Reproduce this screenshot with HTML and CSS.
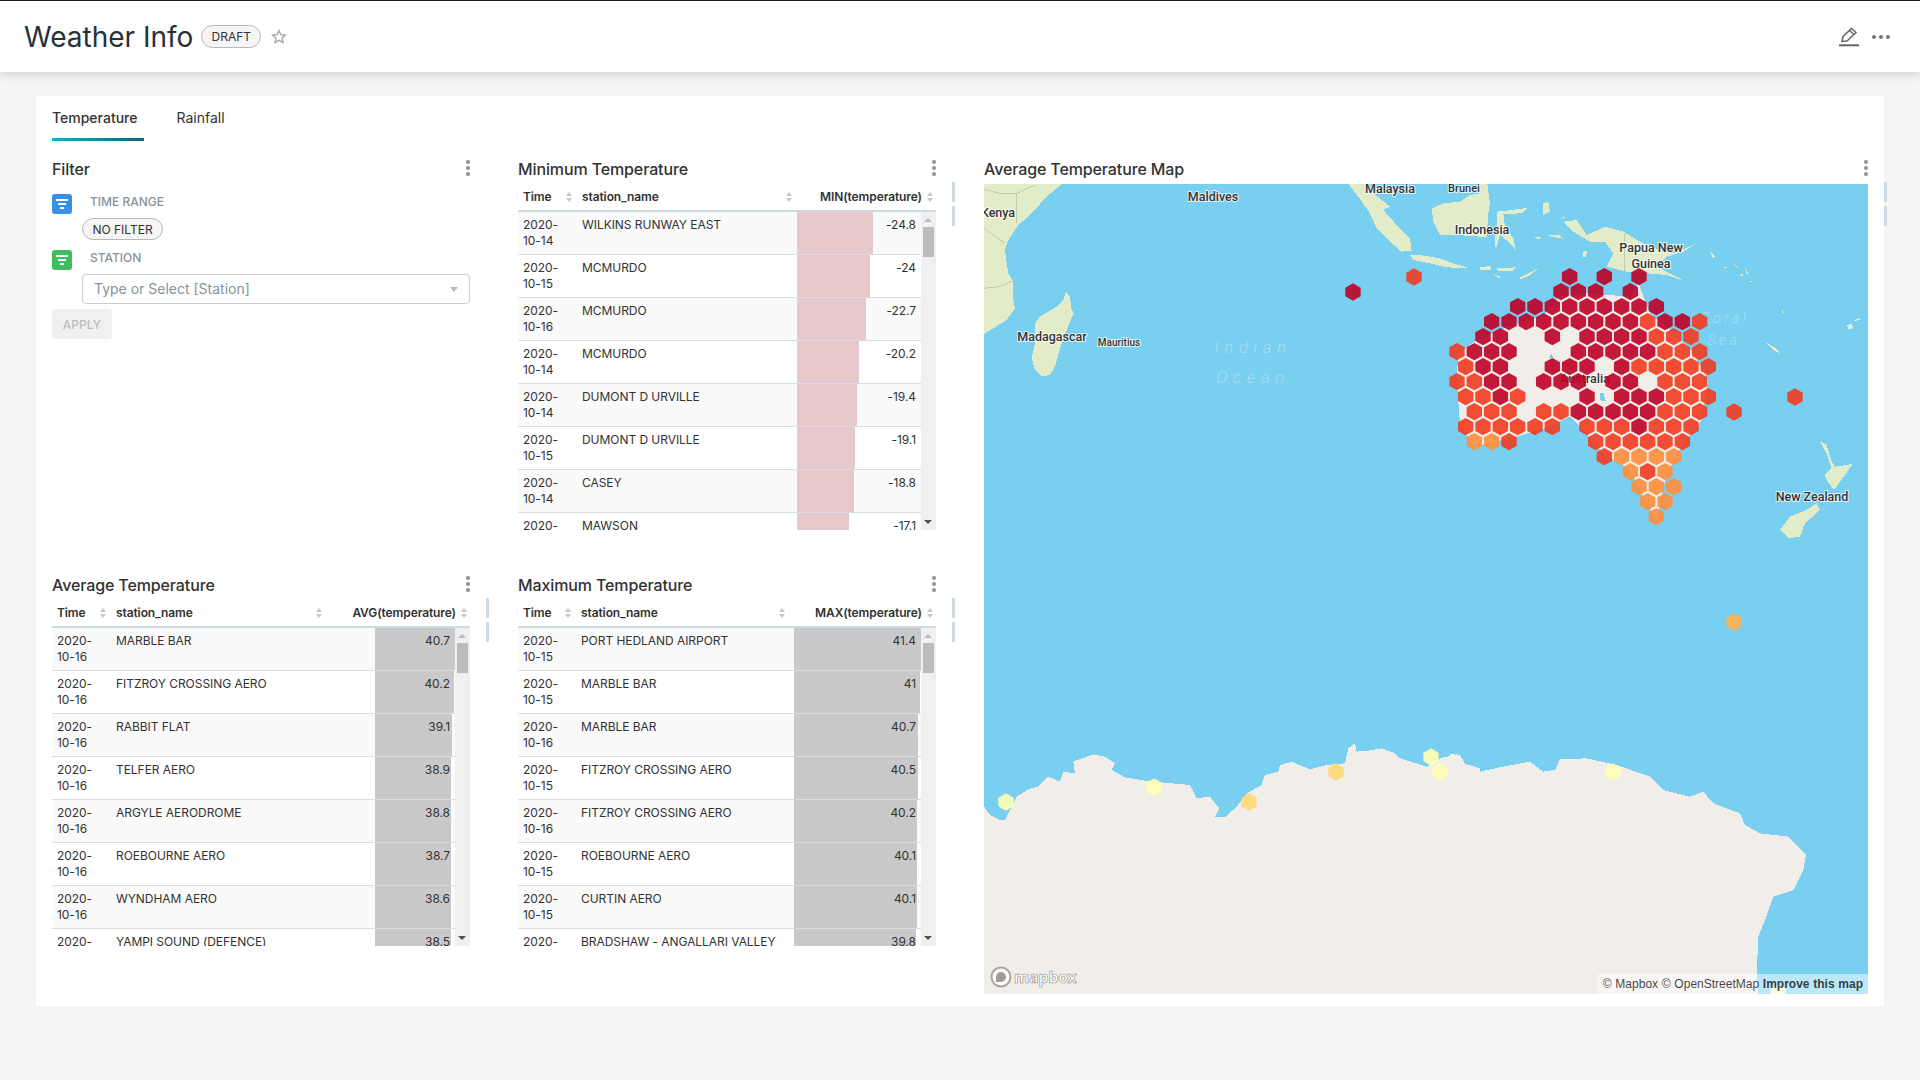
FILE: index.html
```html
<!DOCTYPE html>
<html lang="en">
<head>
    <meta charset="UTF-8">
    <title>Weather Info</title>
    <link rel="stylesheet" href="styles.css">
</head>
<body>
    <svg class="sprite" width="0" height="0">
        <symbol id="kebab" viewBox="0 0 6 18">
            <circle cx="3" cy="3" r="2"/>
            <circle cx="3" cy="9" r="2"/>
            <circle cx="3" cy="15" r="2"/>
        </symbol>
        <symbol id="filter" viewBox="0 0 20 20">
            <path d="M4 5h12v2H4zM6 9h8v2H6zM8 13h4v2H8z"/>
        </symbol>
    </svg>

    <header class="topbar">
        <h1 class="title">Weather Info</h1>
        <span class="pill draft">DRAFT</span>
        <svg class="star" viewBox="0 0 16 16">
            <path d="M8 1.6l1.9 4 4.4.5-3.2 3 .9 4.4L8 11.3l-4 2.2.9-4.4-3.2-3 4.4-.5z"/>
        </svg>
        <div class="actions">
            <svg class="edit" viewBox="0 0 20 20">
                <path d="M3 14.5l1-5L12.5 1.5 17 5.5 8 14zM10.5 3.5l4.5 4"/>
                <path class="edit-line" d="M0 18.3h20"/>
            </svg>
            <div class="dots"><i></i><i></i><i></i></div>
        </div>
    </header>

    <main class="page">
        <div class="card">
            <nav class="tabs">
                <a class="tab active">Temperature</a>
                <a class="tab">Rainfall</a>
            </nav>

            <div class="grid">
                <section class="chart">
                    <div class="chart-head">
                        <h2>Filter</h2>
                        <svg class="kebab"><use href="#kebab"/></svg>
                    </div>
                    <div class="filters">
                        <span class="f-icon blue"><svg><use href="#filter"/></svg></span>
                        <div class="f-body">
                            <div class="f-label">TIME RANGE</div>
                            <span class="pill nofilter">NO FILTER</span>
                        </div>
                        <span class="f-icon green"><svg><use href="#filter"/></svg></span>
                        <div class="f-body">
                            <div class="f-label">STATION</div>
                            <div class="select">Type or Select [Station]<i class="caret"></i></div>
                        </div>
                    </div>
                    <button class="apply" disabled>APPLY</button>
                </section>

                <section class="chart t-min">
                    <div class="chart-head">
                        <h2>Minimum Temperature</h2>
                        <svg class="kebab"><use href="#kebab"/></svg>
                    </div>
                    <div class="thead">
                        <div class="th">Time<i class="sort"></i></div>
                        <div class="th">station_name<i class="sort"></i></div>
                        <div class="th th-num">MIN(temperature)<i class="sort"></i></div>
                    </div>
                    <div class="tbody">
                        <div class="rows">
                            <div class="row"><div>2020-10-14</div><div>WILKINS RUNWAY EAST</div><div class="num"><i class="bar" style="width:76px"></i><span>-24.8</span></div></div>
                            <div class="row"><div>2020-10-15</div><div>MCMURDO</div><div class="num"><i class="bar" style="width:73px"></i><span>-24</span></div></div>
                            <div class="row"><div>2020-10-16</div><div>MCMURDO</div><div class="num"><i class="bar" style="width:69px"></i><span>-22.7</span></div></div>
                            <div class="row"><div>2020-10-14</div><div>MCMURDO</div><div class="num"><i class="bar" style="width:62px"></i><span>-20.2</span></div></div>
                            <div class="row"><div>2020-10-14</div><div>DUMONT D URVILLE</div><div class="num"><i class="bar" style="width:60px"></i><span>-19.4</span></div></div>
                            <div class="row"><div>2020-10-15</div><div>DUMONT D URVILLE</div><div class="num"><i class="bar" style="width:58px"></i><span>-19.1</span></div></div>
                            <div class="row"><div>2020-10-14</div><div>CASEY</div><div class="num"><i class="bar" style="width:57px"></i><span>-18.8</span></div></div>
                            <div class="row"><div>2020-10-14</div><div>MAWSON</div><div class="num"><i class="bar" style="width:52px"></i><span>-17.1</span></div></div>
                        </div>
                        <div class="scroll"><i class="up"></i><i class="thumb"></i><i class="down"></i></div>
                    </div>
                    <i class="handle"></i><i class="handle second"></i>
                </section>

                <section class="chart map-chart">
                    <div class="chart-head">
                        <h2>Average Temperature Map</h2>
                        <svg class="kebab"><use href="#kebab"/></svg>
                    </div>
                    <div class="map">
                        <svg class="map-svg" viewBox="984 184 884 810">
                            <rect x="984" y="184" width="884" height="810" fill="#78cff0"/>

                            <g class="green-land" transform="translate(980 160) scale(.33333)">
                                <path d="M0 72H245L200 110 150 165 115 195 85 240 75 270 80 310 85 340 100 365 100 420 105 445 80 480 40 505 12 522H0z"/>
                                <path d="M258 395L270 410 275 450 281 460 268 490 245 550 225 620 210 645 185 650 165 630 155 595 165 550 165 490 180 470 230 440 250 420z"/>
                                <path d="M1105 72H1160L1180 100 1230 140 1210 150 1250 195 1290 235 1295 272 1265 275 1230 245 1190 205 1170 160 1135 110z"/>
                                <path d="M1290 285L1320 285 1380 295 1420 310 1470 325 1400 322 1350 310 1300 300z"/>
                                <path d="M1355 145L1390 130 1440 125 1470 105 1500 100V230L1430 225 1380 225 1360 185z"/>
                                <path class="border" d="M12 88L60 100 110 100 165 75M110 100V190M12 205L75 250M12 385L60 380 100 362"/>
                            </g>

                            <g class="green-land" transform="translate(1480 160) scale(.33333)">
                                <path d="M0 72H22L30 130 25 160 20 230H0z"/>
                                <path d="M50 155L100 150 145 143 125 160 70 162 75 200 100 235 107 270 90 250 60 225 47 270 45 230 50 195z"/>
                                <path d="M250 185L290 180 320 225 375 200 430 215 480 245 540 270 580 280 640 255 610 275 560 290 530 320 580 345 610 362 560 345 500 340 440 335 380 320 400 280 375 245 330 245 280 215z"/>
                                <path d="M165 230L183 232 180 238 165 234zM200 225L240 225 248 236 215 230zM310 275L322 272 318 292 310 292zM0 322L30 318 35 330 0 330zM50 325L110 322 100 332 55 332zM120 352L178 323 150 345 122 358zM40 342L60 350 58 356z"/>
                                <path d="M190 130L205 125 210 155 190 165zM245 172L255 170 255 176zM688 272L705 290 700 295zM730 318L745 325 735 325zM762 312L778 325 770 322zM780 342L795 345 785 348zM795 322L808 345 800 340zM810 362L818 366 812 366z"/>
                                <path d="M862 550L885 562 905 585 880 570zM905 445L912 458 908 458zM1100 495L1115 492 1120 505 1105 508zM1122 482L1143 472 1140 478 1125 485z"/>
                                <path d="M1020 845L1040 855 1055 905 1065 920 1118 912 1095 945 1062 990 1040 960 1035 945 1055 925 1040 880zM1010 1030L1020 1050 975 1090 960 1130 925 1135 900 1110 930 1070 980 1050z"/>
                                <path class="border" d="M435 218V335"/>
                            </g>

                            <g class="land" transform="translate(1400 240) scale(.33333)">
                                <path d="M175 340L230 300 330 258 430 225 480 170 560 160 690 170 715 130 750 220 800 260 880 340 925 420 905 540 845 620 800 700 780 790 770 840 740 790 690 690 610 640 560 580 510 530 450 560 350 590 220 620 180 550 170 420z"/>
                                <path class="lake" d="M445 355L455 342 460 355zM600 460L610 458 618 484 602 484z"/>
                            </g>

                            <g class="land" transform="translate(980 720) scale(.33333)">
                                <path d="M0 260H12L30 285 60 300 75 300 110 230 145 208 175 200 205 170 240 185 250 155 285 160 280 125 340 103 375 110 405 130 395 150 435 172 500 183 630 195 650 235 690 230 718 265 705 292 735 292 770 260 800 220 845 195 855 165 895 155 900 135 935 125 990 148 1040 135 1095 130 1105 85 1125 70 1130 95 1165 92 1205 85 1245 100 1260 115 1340 140 1380 115 1430 103 1450 130 1500 145V830H0z"/>
                            </g>
                            <g class="land" transform="translate(1450 720) scale(.33333)">
                                <path d="M0 102L30 105 45 130 90 155 160 140 240 125 280 155 315 150 330 118 410 115 500 135 600 170 640 210 720 230 760 215 790 250 870 280 885 315 930 340 1015 350 1068 405 1060 450 1030 510 970 530 945 600 925 650 920 760 925 825H0z"/>
                            </g>

                            <g class="labels">
                                <text x="1390" y="193">Malaysia</text>
                                <text class="small" x="1464" y="192">Brunei</text>
                                <text x="1213" y="201">Maldives</text>
                                <text x="998" y="217">Kenya</text>
                                <text x="1052" y="341">Madagascar</text>
                                <text class="tiny" x="1119" y="346">Mauritius</text>
                                <text x="1482" y="234">Indonesia</text>
                                <text x="1651" y="252">Papua New</text>
                                <text x="1651" y="268">Guinea</text>
                                <text x="1585" y="383">Australia</text>
                                <text x="1812" y="501">New Zealand</text>
                                <text class="sea" x="1253" y="353">Indian</text>
                                <text class="sea" x="1253" y="383">Ocean</text>
                                <text class="sea small-sea" x="1725" y="323">Coral</text>
                                <text class="sea small-sea" x="1724" y="345">Sea</text>
                            </g>

                            <g id="hexes"></g>
                        </svg>
                        <div class="mapbox">
                            <svg class="mapbox-mark" viewBox="0 0 22 22">
                                <circle cx="11" cy="11" r="9.5"/>
                                <path d="M6 16V11a5 5 0 1 1 5 5z"/>
                            </svg>
                            <span>mapbox</span>
                        </div>
                        <div class="attrib">© Mapbox © OpenStreetMap <b>Improve this map</b></div>
                    </div>
                    <i class="handle"></i><i class="handle second"></i>
                </section>

                <section class="chart t-avg">
                    <div class="chart-head">
                        <h2>Average Temperature</h2>
                        <svg class="kebab"><use href="#kebab"/></svg>
                    </div>
                    <div class="thead">
                        <div class="th">Time<i class="sort"></i></div>
                        <div class="th">station_name<i class="sort"></i></div>
                        <div class="th th-num">AVG(temperature)<i class="sort"></i></div>
                    </div>
                    <div class="tbody">
                        <div class="rows">
                            <div class="row"><div>2020-10-16</div><div>MARBLE BAR</div><div class="num"><i class="bar" style="width:80px"></i><span>40.7</span></div></div>
                            <div class="row"><div>2020-10-16</div><div>FITZROY CROSSING AERO</div><div class="num"><i class="bar" style="width:79px"></i><span>40.2</span></div></div>
                            <div class="row"><div>2020-10-16</div><div>RABBIT FLAT</div><div class="num"><i class="bar" style="width:77px"></i><span>39.1</span></div></div>
                            <div class="row"><div>2020-10-16</div><div>TELFER AERO</div><div class="num"><i class="bar" style="width:76px"></i><span>38.9</span></div></div>
                            <div class="row"><div>2020-10-16</div><div>ARGYLE AERODROME</div><div class="num"><i class="bar" style="width:76px"></i><span>38.8</span></div></div>
                            <div class="row"><div>2020-10-16</div><div>ROEBOURNE AERO</div><div class="num"><i class="bar" style="width:76px"></i><span>38.7</span></div></div>
                            <div class="row"><div>2020-10-16</div><div>WYNDHAM AERO</div><div class="num"><i class="bar" style="width:76px"></i><span>38.6</span></div></div>
                            <div class="row"><div>2020-10-16</div><div>YAMPI SOUND (DEFENCE)</div><div class="num"><i class="bar" style="width:76px"></i><span>38.5</span></div></div>
                        </div>
                        <div class="scroll"><i class="up"></i><i class="thumb"></i><i class="down"></i></div>
                    </div>
                    <i class="handle"></i><i class="handle second"></i>
                </section>

                <section class="chart t-max">
                    <div class="chart-head">
                        <h2>Maximum Temperature</h2>
                        <svg class="kebab"><use href="#kebab"/></svg>
                    </div>
                    <div class="thead">
                        <div class="th">Time<i class="sort"></i></div>
                        <div class="th">station_name<i class="sort"></i></div>
                        <div class="th th-num">MAX(temperature)<i class="sort"></i></div>
                    </div>
                    <div class="tbody">
                        <div class="rows">
                            <div class="row"><div>2020-10-15</div><div>PORT HEDLAND AIRPORT</div><div class="num"><i class="bar" style="width:127px"></i><span>41.4</span></div></div>
                            <div class="row"><div>2020-10-15</div><div>MARBLE BAR</div><div class="num"><i class="bar" style="width:126px"></i><span>41</span></div></div>
                            <div class="row"><div>2020-10-16</div><div>MARBLE BAR</div><div class="num"><i class="bar" style="width:124px"></i><span>40.7</span></div></div>
                            <div class="row"><div>2020-10-15</div><div>FITZROY CROSSING AERO</div><div class="num"><i class="bar" style="width:124px"></i><span>40.5</span></div></div>
                            <div class="row"><div>2020-10-16</div><div>FITZROY CROSSING AERO</div><div class="num"><i class="bar" style="width:123px"></i><span>40.2</span></div></div>
                            <div class="row"><div>2020-10-15</div><div>ROEBOURNE AERO</div><div class="num"><i class="bar" style="width:123px"></i><span>40.1</span></div></div>
                            <div class="row"><div>2020-10-15</div><div>CURTIN AERO</div><div class="num"><i class="bar" style="width:123px"></i><span>40.1</span></div></div>
                            <div class="row"><div>2020-10-15</div><div>BRADSHAW - ANGALLARI VALLEY</div><div class="num"><i class="bar" style="width:122px"></i><span>39.8</span></div></div>
                        </div>
                        <div class="scroll"><i class="up"></i><i class="thumb"></i><i class="down"></i></div>
                    </div>
                    <i class="handle"></i><i class="handle second"></i>
                </section>
            </div>
        </div>
    </main>

    <script src="script.js"></script>
</body>
</html>
```

FILE: styles.css
```css
* {
    box-sizing: border-box;
}

body {
    margin: 0;
    height: 1080px;
    overflow: hidden;
    background: #f5f5f5;
    font-family: Inter, "Liberation Sans", sans-serif;
    font-size: 12px;
    color: #323232;
}

.sprite {
    position: absolute;
}

/* top bar */
.topbar {
    display: flex;
    align-items: center;
    height: 72px;
    padding: 0 24px;
    background: #fff;
    border-top: 1px solid #1c1f22;
    box-shadow: 0 2px 10px rgba(0, 0, 0, 0.16);
}

.title {
    margin: 0;
    font-size: 28px;
    font-weight: 400;
    color: #263238;
}

.pill {
    display: inline-flex;
    align-items: center;
    justify-content: center;
    border: 1px solid #b8b8b8;
    border-radius: 12px;
    background: #f5f5f5;
    font-size: 12px;
    color: #323232;
}

.draft {
    width: 60px;
    height: 23px;
    margin-left: 8px;
}

.star {
    width: 16px;
    height: 16px;
    margin-left: 10px;
    fill: none;
    stroke: #a8aeb2;
    stroke-width: 1.5;
}

.actions {
    display: flex;
    align-items: center;
    gap: 13px;
    margin-left: auto;
    padding-right: 6px;
}

.edit {
    width: 20px;
    height: 20px;
    fill: none;
    stroke: #666;
    stroke-width: 1.5;
}

.edit-line {
    stroke-width: 2;
}

.dots {
    display: flex;
    gap: 3px;
}

.dots i {
    width: 4px;
    height: 4px;
    border-radius: 50%;
    background: #777;
}

/* card */
.page {
    padding: 24px 36px 0;
}

.card {
    padding: 0 16px 12px;
    background: #fff;
}

.tabs {
    display: flex;
    gap: 32px;
    margin-bottom: 16px;
}

.tab {
    height: 45px;
    padding: 12px 7px 0 0;
    font-size: 14px;
    line-height: 20px;
    position: relative;
}

.tab.active {
    font-weight: 500;
}

.tab.active::after {
    content: "";
    position: absolute;
    left: 0;
    right: 0;
    bottom: 0;
    height: 3px;
    background: linear-gradient(90deg, #20a7c9, #1a6373);
}

.grid {
    display: grid;
    grid-template-columns: 418px 418px 884px;
    grid-template-rows: 416px 421px;
    column-gap: 48px;
}

.chart {
    position: relative;
}

.map-chart {
    grid-column: 3;
    grid-row: 1 / span 2;
}

.chart-head {
    display: flex;
    align-items: center;
    justify-content: space-between;
    height: 24px;
    margin-bottom: 3px;
}

.chart-head h2 {
    margin: 0;
    font-size: 16px;
    font-weight: 500;
    letter-spacing: -0.12px;
    color: #323232;
}

.kebab {
    width: 6px;
    height: 18px;
    margin-right: -1px;
    margin-top: -2px;
    fill: #879399;
}

.handle {
    position: absolute;
    left: 434px;
    top: 25px;
    width: 3px;
    height: 20px;
    background: #cfdbe0;
}

.handle.second {
    top: 49px;
}

.map-chart .handle {
    left: 900px;
}

/* filter box */
.filters {
    display: grid;
    grid-template-columns: 30px 388px;
    row-gap: 10px;
    margin-top: 13px;
}

.f-icon {
    width: 20px;
    height: 20px;
    border-radius: 3px;
}

.f-icon svg {
    display: block;
    width: 20px;
    height: 20px;
    fill: #fff;
}

.blue {
    background: #3a8fe8;
}

.green {
    background: #3dbf5e;
}

.f-label {
    height: 14px;
    margin-bottom: 10px;
    padding-left: 8px;
    font-size: 12px;
    font-weight: 500;
    line-height: 16px;
    color: #879399;
}

.nofilter {
    width: 81px;
    height: 22px;
}

.select {
    position: relative;
    height: 30px;
    padding-left: 11px;
    border: 1px solid #ccc;
    border-radius: 4px;
    font-size: 14px;
    line-height: 28px;
    color: #879399;
}

.caret {
    position: absolute;
    right: 11px;
    top: 12px;
    border: 4px solid transparent;
    border-top: 5px solid #bbb;
}

.apply {
    display: block;
    width: 60px;
    height: 30px;
    margin-top: 5px;
    border: 0;
    border-radius: 4px;
    background: #f0f0f0;
    font-family: inherit;
    font-size: 12px;
    font-weight: 500;
    color: #bdbdbd;
}

/* tables */
.thead {
    display: grid;
    height: 28px;
    border-bottom: 2px solid #cfdbe0;
    font-weight: 600;
    letter-spacing: -0.1px;
    line-height: 24px;
}

.th {
    display: flex;
    align-items: center;
    justify-content: space-between;
    padding: 0 4px 0 5px;
}

.th-num {
    justify-content: flex-end;
    gap: 5px;
    padding-right: 2px;
}

.sort {
    position: relative;
    width: 7px;
    height: 10px;
    flex: none;
}

.sort::before,
.sort::after {
    content: "";
    position: absolute;
    left: 0;
    border: 3.5px solid transparent;
}

.sort::before {
    top: -3px;
    border-bottom: 4px solid #c2c8cb;
}

.sort::after {
    bottom: -3px;
    border-top: 4px solid #c2c8cb;
}

.tbody {
    display: flex;
    height: 318px;
    overflow: hidden;
}

.rows {
    width: 403px;
    flex: none;
}

.row {
    display: grid;
    height: 43px;
    border-bottom: 1px solid #d5dfe3;
    letter-spacing: -0.05px;
    line-height: 16px;
}

.row:nth-child(odd) {
    background: #fafafa;
}

.row > div {
    padding: 5px 5px 0;
}

.num {
    position: relative;
    text-align: right;
}

.num span {
    position: relative;
}

.bar {
    position: absolute;
    left: 0;
    top: 0;
    bottom: 0;
    background: #c9c9c9;
}

.t-min .bar {
    background: #e7c9cb;
}

.t-min .thead {
    grid-template-columns: 59px 220px 139px;
}

.t-min .row {
    grid-template-columns: 59px 220px 124px;
}

.t-avg .thead {
    grid-template-columns: 59px 216px 143px;
}

.t-avg .row {
    grid-template-columns: 59px 264px 80px;
}

.t-max .thead {
    grid-template-columns: 58px 214px 146px;
}

.t-max .row {
    grid-template-columns: 58px 218px 127px;
}

.scroll {
    position: relative;
    width: 15px;
    background: #f0f0f0;
}

.thumb {
    position: absolute;
    left: 2px;
    top: 15px;
    width: 11px;
    height: 30px;
    background: #bbb;
}

.up,
.down {
    position: absolute;
    left: 3px;
    border: 4px solid transparent;
}

.up {
    top: 2px;
    border-bottom: 4px solid #bdbdbd;
}

.down {
    bottom: 2px;
    border-top: 4px solid #505050;
}

/* map */
.map {
    position: relative;
    height: 810px;
    overflow: hidden;
}

.map-svg {
    display: block;
    width: 884px;
    height: 810px;
}

.green-land,
.land {
    shape-rendering: crispEdges;
}

.green-land {
    fill: #e3ecc8;
}

.land {
    fill: #f1ede9;
}

.lake {
    fill: #78cff0;
}

.border {
    fill: none;
    stroke: #b3b8a6;
    stroke-width: 2;
}

.labels text {
    font-family: Roboto, sans-serif;
    font-size: 12.5px;
    font-weight: 500;
    text-anchor: middle;
    fill: #333;
    stroke: rgba(255, 255, 255, 0.75);
    stroke-width: 2px;
    paint-order: stroke;
}

.labels .small {
    font-size: 11px;
}

.labels .tiny {
    font-size: 10px;
}

.labels .sea {
    font-size: 17px;
    font-weight: 300;
    font-style: italic;
    letter-spacing: 5.5px;
    fill: #a9def5;
    stroke: none;
}

.labels .small-sea {
    font-size: 14px;
    letter-spacing: 3.5px;
}

.hex {
    opacity: 0.9;
}

.mapbox {
    position: absolute;
    left: 6px;
    bottom: 6px;
    display: flex;
    align-items: center;
    gap: 2px;
}

.mapbox-mark {
    width: 22px;
    height: 22px;
    fill: #a09c98;
    stroke: none;
}

.mapbox-mark circle {
    fill: #fff;
    stroke: #a8a4a0;
    stroke-width: 2;
}

.mapbox span {
    font-family: "Open Sans", sans-serif;
    font-size: 15.5px;
    font-weight: 700;
    line-height: 20px;
    color: #fff;
    -webkit-text-stroke: 0.6px #8e8a86;
}

.attrib {
    position: absolute;
    right: 0;
    bottom: 0;
    height: 20px;
    padding: 0 5px;
    background: rgba(255, 255, 255, 0.5);
    font-family: "Liberation Sans", Arial, sans-serif;
    font-size: 12px;
    line-height: 20px;
    word-spacing: 0.4px;
    color: rgba(0, 0, 0, 0.75);
}
```

FILE: script.js
```js
// hex layer for the map. d/o/l are the colour buckets, '.' is an empty cell
const colors = { d: '#bd0026', o: '#f03b20', l: '#fd8d3c' };

const rows = [
    [110, 509, 'd.d.d'],
    [155, 483, 'ddd.d'],
    [200, 353, 'ddddddddd'],
    [245, 275, 'dddddddddoddo'],
    [290, 249, 'dd..d.ddddooo'],
    [335, 171, 'oddd...dddddooo'],
    [380, 197, 'odd..ddd.dooooo'],
    [425, 171, 'oodd.ddd.dd.ooo'],
    [470, 197, 'oodo...d.dddooo'],
    [515, 223, 'ooo.oodddddooo'],
    [560, 197, 'oooooo.ooodooo'],
    [605, 223, 'llo....oooooo'],
    [650, 613, 'ollll'],
    [695, 691, 'lol'],
    [740, 717, 'lll'],
    [785, 743, 'll'],
    [830, 769, 'l']
];

// cells that are off the grid, in page coordinates
const loose = [
    [1353, 292, '#bd0026'],
    [1414, 277, '#f03b20'],
    [1734, 412, '#f03b20'],
    [1795, 397, '#f03b20'],
    [1734, 622, '#feb24c'],
    [1006, 802, '#ffffb2'],
    [1154, 787, '#ffffb2'],
    [1249, 802, '#fed976'],
    [1336, 772, '#fed976'],
    [1431, 757, '#ffffb2'],
    [1440, 772, '#ffffb2'],
    [1613, 772, '#ffffb2'],
    [1778, 993, '#ffffb2']
];

const layer = document.getElementById('hexes');

function addHex(x, y, fill) {
    const r = 8.67;
    const w = 7.7;
    const points = [
        [x, y - r], [x + w, y - r / 2], [x + w, y + r / 2],
        [x, y + r], [x - w, y + r / 2], [x - w, y - r / 2]
    ].map(p => p.join(',')).join(' ');

    const hex = document.createElementNS('http://www.w3.org/2000/svg', 'polygon');
    hex.setAttribute('points', points);
    hex.setAttribute('fill', fill);
    hex.setAttribute('class', 'hex');
    layer.appendChild(hex);
}

rows.forEach(([y, start, cells]) => {
    [...cells].forEach((cell, i) => {
        if (cell !== '.') {
            addHex(1400 + (start + i * 52) / 3, 240 + y / 3, colors[cell]);
        }
    });
});

loose.forEach(([x, y, fill]) => addHex(x, y, fill));
```
